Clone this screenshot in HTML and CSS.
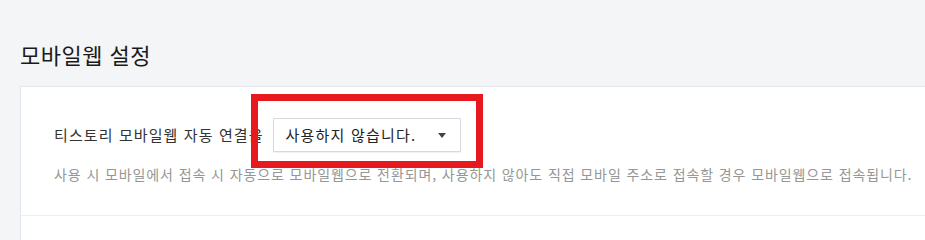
FILE: index.html
```html
<!DOCTYPE html>
<html lang="ko">
<head>
<meta charset="utf-8">
<title>모바일웹 설정</title>
<link rel="stylesheet" href="styles.css">
</head>
<body>
<div class="page">
  <h2 class="title">모바일웹 설정</h2>
  <div class="card">
    <div class="item">
      <div class="row">
        <span class="label">티스토리 모바일웹 자동 연결을</span>
        <div class="select-wrap">
          <div class="select">
            <span class="select-text">사용하지 않습니다.</span>
            <span class="caret"></span>
          </div>
          <div class="highlight"></div>
        </div>
      </div>
      <p class="desc">사용 시 모바일에서 접속 시 자동으로 모바일웹으로 전환되며, 사용하지 않아도 직접 모바일 주소로 접속할 경우 모바일웹으로 접속됩니다.</p>
    </div>
  </div>
</div>
</body>
</html>
```

FILE: styles.css
```css
html, body {
  margin: 0;
  padding: 0;
  background: #f4f5f7;
  font-family: "Noto Sans CJK KR", "Noto Sans", sans-serif;
  overflow: hidden;
}
.page {
  padding: 0 0 0 20px;
  height: 100vh;
  min-height: 236px;
  box-sizing: border-box;
  display: flex;
  flex-direction: column;
}
.title {
  margin: 0;
  padding: 38px 0 16px 0;
  font-size: 22px;
  line-height: 32px;
  font-weight: 400;
  color: #1a1a1a;
  letter-spacing: 0.5px;
}
.card {
  flex: 1;
  background: #fff;
  border-top: 1px solid #e3e6eb;
  border-left: 1px solid #e3e6eb;
}
.item {
  padding: 31px 33px 31px 33px;
  border-bottom: 1px solid #eeeff1;
}
.row {
  display: flex;
  align-items: center;
  gap: 9px;
}
.label {
  font-size: 15px;
  line-height: 20px;
  color: #333;
  letter-spacing: 1.1px;
}
.select-wrap {
  position: relative;
}
.select {
  width: 188px;
  height: 34px;
  box-sizing: border-box;
  border: 1px solid #d5d8dd;
  border-radius: 1px;
  box-shadow: 0 1px 1px rgba(0,0,0,0.06);
  display: flex;
  align-items: center;
  justify-content: space-between;
  padding: 0 14px 0 12px;
  background: #fff;
}
.select-text {
  font-size: 15px;
  color: #222;
  line-height: 20px;
  letter-spacing: 1.2px;
}
.caret {
  width: 0;
  height: 0;
  border-left: 4px solid transparent;
  border-right: 4px solid transparent;
  border-top: 5px solid #444;
}
.highlight {
  position: absolute;
  left: -22px;
  top: -24px;
  width: 232px;
  height: 74px;
  box-sizing: border-box;
  border: 7px solid #e8191e;
  pointer-events: none;
}
.desc {
  margin: 12px 0 0 0;
  font-size: 14px;
  line-height: 20px;
  color: #969696;
  white-space: nowrap;
  letter-spacing: 0.9px;
}
```
